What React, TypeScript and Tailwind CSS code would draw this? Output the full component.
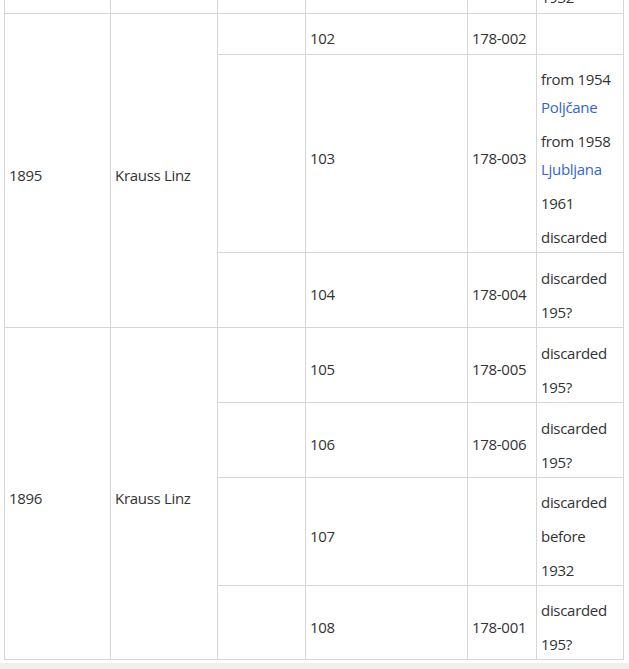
type Line = { text: string; link?: boolean }

function Notes({ lines }: { lines: Line[][] }) {
  return (
    <div>
      {lines.map((group, i) => (
        <div key={i} className={i < lines.length - 1 ? "mb-[6px]" : ""}>
          {group.map((l) => (
            <div
              key={l.text}
              className={l.link ? "leading-[28px] text-[#3366cc]" : "leading-[28px]"}
            >
              {l.text}
            </div>
          ))}
        </div>
      ))}
    </div>
  )
}

const cell = "border border-[#d6d6d6] px-[4px] pt-[9px] pb-0 align-middle text-left font-normal"

const discarded195: Line[][] = [[{ text: "discarded" }], [{ text: "195?" }]]

export default function App() {
  return (
    <div
      className="h-[669px] w-[629px] overflow-hidden bg-white text-[15px] tracking-[-0.3px] text-[#333333]"
      style={{ fontFamily: '"Open Sans", "Noto Sans", sans-serif' }}
    >
      <div className="h-[663px] overflow-hidden">
        <table className="ml-[4px] mt-[-47px] w-[619px] table-fixed border-collapse">
          <colgroup>
            <col className="w-[106px]" />
            <col className="w-[107px]" />
            <col className="w-[88px]" />
            <col className="w-[162px]" />
            <col className="w-[69px]" />
            <col className="w-[87px]" />
          </colgroup>
          <tbody>
            <tr className="h-[60px]">
              <td className={cell}></td>
              <td className={cell}></td>
              <td className={cell}></td>
              <td className={cell}></td>
              <td className={cell}></td>
              <td className="border border-[#d6d6d6] px-[4px] pb-[2px] align-bottom">
                <div className="leading-[28px]">1932</div>
              </td>
            </tr>

            <tr className="h-[41px]">
              <td className={cell} rowSpan={3}>1895</td>
              <td className={cell} rowSpan={3}>Krauss Linz</td>
              <td className={cell}></td>
              <td className={cell}>102</td>
              <td className={cell}>178-002</td>
              <td className={cell}></td>
            </tr>
            <tr className="h-[198px]">
              <td className={cell}></td>
              <td className={cell}>103</td>
              <td className={cell}>178-003</td>
              <td className={cell}>
                <Notes
                  lines={[
                    [{ text: "from 1954" }, { text: "Poljčane", link: true }],
                    [{ text: "from 1958" }, { text: "Ljubljana", link: true }],
                    [{ text: "1961" }],
                    [{ text: "discarded" }],
                  ]}
                />
              </td>
            </tr>
            <tr className="h-[75px]">
              <td className={cell}></td>
              <td className={cell}>104</td>
              <td className={cell}>178-004</td>
              <td className={cell}>
                <Notes lines={discarded195} />
              </td>
            </tr>

            <tr className="h-[75px]">
              <td className={cell} rowSpan={4}>1896</td>
              <td className={cell} rowSpan={4}>Krauss Linz</td>
              <td className={cell}></td>
              <td className={cell}>105</td>
              <td className={cell}>178-005</td>
              <td className={cell}>
                <Notes lines={discarded195} />
              </td>
            </tr>
            <tr className="h-[75px]">
              <td className={cell}></td>
              <td className={cell}>106</td>
              <td className={cell}>178-006</td>
              <td className={cell}>
                <Notes lines={discarded195} />
              </td>
            </tr>
            <tr className="h-[108px]">
              <td className={cell}></td>
              <td className={cell}>107</td>
              <td className={cell}></td>
              <td className={cell}>
                <Notes
                  lines={[[{ text: "discarded" }], [{ text: "before" }], [{ text: "1932" }]]}
                />
              </td>
            </tr>
            <tr className="h-[74px]">
              <td className={cell}></td>
              <td className={cell}>108</td>
              <td className={cell}>178-001</td>
              <td className={cell}>
                <Notes lines={discarded195} />
              </td>
            </tr>
          </tbody>
        </table>
      </div>
      <div className="h-[6px] bg-[#efefeb]" />
    </div>
  )
}
